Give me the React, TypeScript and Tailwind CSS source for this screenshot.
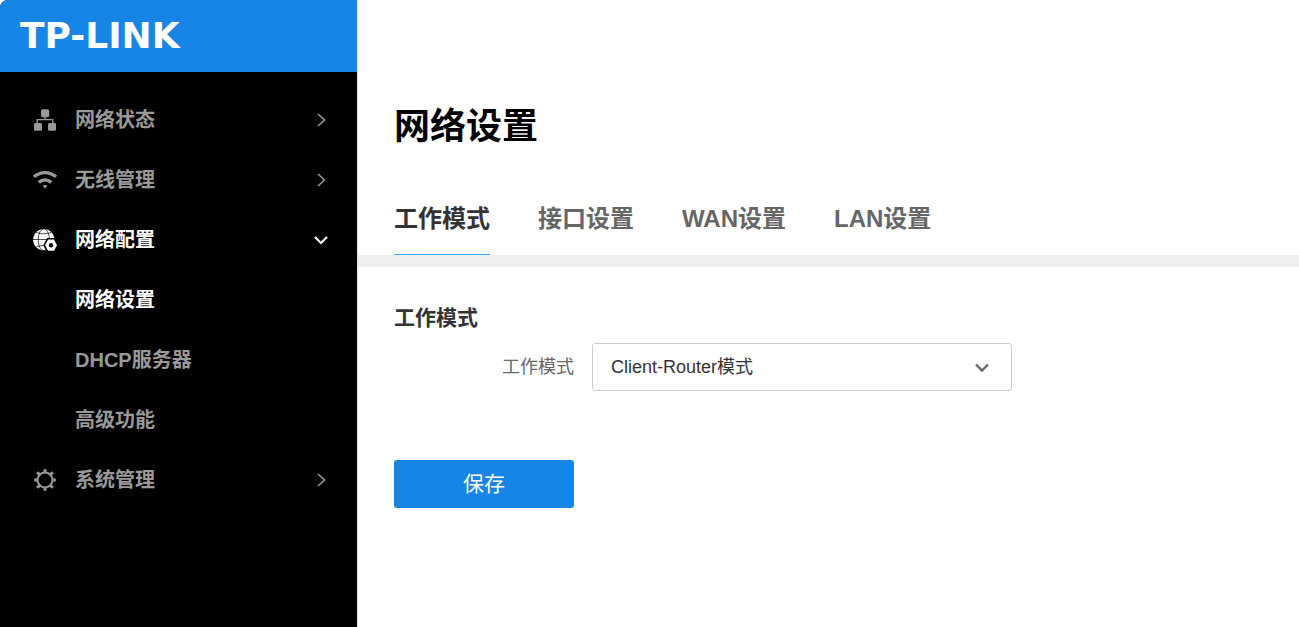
import { useState } from 'react'
import type { ReactNode } from 'react'

interface MenuItem {
  id: string
  label: string
  icon: ReactNode
  children?: string[]
}

function StatusIcon() {
  return (
    <svg viewBox="0 0 24 24" className="size-6" fill="currentColor" aria-hidden="true">
      <rect x="8" y="1.2" width="8.2" height="8" rx="1.8" />
      <rect x="1" y="15" width="8" height="7.8" rx="1.6" />
      <rect x="15" y="15" width="8" height="7.8" rx="1.6" />
      <path d="M12 9v3M4.2 16v-4.4h15.6V16" fill="none" stroke="currentColor" strokeWidth="1.3" />
    </svg>
  )
}

function WifiIcon() {
  return (
    <svg viewBox="0 0 24 24" className="size-6" fill="none" stroke="currentColor" aria-hidden="true">
      <path d="M1 8.8C7.5 3.2 16.5 3.2 23 8.8" strokeWidth="3.4" />
      <path d="M5.8 14.4c3.8-3.2 8.6-3.2 12.4 0" strokeWidth="3.4" />
      <path d="M9.6 17.6c1.5-.8 3.3-.8 4.8 0L12 20.8z" fill="currentColor" stroke="none" />
    </svg>
  )
}

function GlobeIcon() {
  return (
    <svg viewBox="0 0 24 24" className="size-6" aria-hidden="true">
      <circle cx="10.8" cy="11.7" r="10.7" fill="currentColor" />
      <g fill="none" stroke="#000" strokeWidth="0.7">
        <ellipse cx="10.8" cy="11.7" rx="5.6" ry="11" />
        <path d="M0 11.5h21.5M3 4.2c4.6 2.2 11 2.2 15.6 0M3 19.2c4.6-2.2 11-2.2 15.6 0" />
      </g>
      <path
        d="M14.6 10.8h6.8l3.5 6.4-3.5 6.4h-6.8l-3.5-6.4z"
        fill="currentColor"
        stroke="#000"
        strokeWidth="1.6"
      />
      <circle cx="18" cy="17.2" r="2.2" fill="#000" />
    </svg>
  )
}

function GearIcon() {
  return (
    <svg viewBox="0 0 24 24" className="size-6" fill="none" stroke="currentColor" aria-hidden="true">
      <circle cx="12" cy="12" r="7.5" strokeWidth="2" />
      <path
        d="M12 1.2v3.6M12 19.2v3.6M1.2 12h3.6M19.2 12h3.6M4.2 4.2l2.8 2.8M17 17l2.8 2.8M4.2 19.8L7 17M17 7l2.8-2.8"
        strokeWidth="3"
      />
    </svg>
  )
}

function Chevron({ open }: { open: boolean }) {
  return (
    <svg viewBox="0 0 24 24" className="size-6" fill="none" stroke="currentColor" aria-hidden="true">
      {open ? (
        <path d="M6 9l6 6 6-6" strokeWidth="2.2" />
      ) : (
        <path d="M9 6l6.5 6L9 18" strokeWidth="1.6" />
      )}
    </svg>
  )
}

const menu: MenuItem[] = [
  { id: 'status', label: '网络状态', icon: <StatusIcon /> },
  { id: 'wireless', label: '无线管理', icon: <WifiIcon /> },
  {
    id: 'network',
    label: '网络配置',
    icon: <GlobeIcon />,
    children: ['网络设置', 'DHCP服务器', '高级功能'],
  },
  { id: 'system', label: '系统管理', icon: <GearIcon /> },
]

const tabs = ['工作模式', '接口设置', 'WAN设置', 'LAN设置']

function Sidebar() {
  const [openId, setOpenId] = useState('network')
  const [page, setPage] = useState('网络设置')

  return (
    <aside className="w-[357px] shrink-0 overflow-hidden rounded-tl-lg bg-black">
      <div className="flex h-[72px] items-center bg-[#1785e6] pl-5">
        <span className="font-['DejaVu_Sans',sans-serif] text-4xl leading-none font-bold text-white">
          TP-LINK
        </span>
      </div>
      <nav className="pt-[18px] text-xl font-bold">
        {menu.map((item) => {
          const open = item.id === openId
          return (
            <div key={item.id}>
              <button
                type="button"
                aria-expanded={open}
                onClick={() => setOpenId(open ? '' : item.id)}
                className={`flex h-[60px] w-full items-center gap-[18px] pr-6 pl-[33px] ${
                  open ? 'text-white' : 'text-[#999]'
                }`}
              >
                {item.icon}
                <span className="flex-1 text-left">{item.label}</span>
                <Chevron open={open} />
              </button>
              {open &&
                item.children?.map((child) => (
                  <a
                    key={child}
                    href="#"
                    onClick={() => setPage(child)}
                    className={`flex h-[60px] items-center pl-[75px] ${
                      child === page ? 'text-white' : 'text-[#999]'
                    }`}
                  >
                    {child}
                  </a>
                ))}
            </div>
          )
        })}
      </nav>
    </aside>
  )
}

export default function App() {
  const [tab, setTab] = useState('工作模式')
  const [mode, setMode] = useState('client-router')

  return (
    <div
      lang="zh-CN"
      className="flex min-h-screen bg-white font-['Liberation_Sans','Noto_Sans_CJK_SC',sans-serif] text-[#333]"
    >
      <Sidebar />
      <main className="min-w-0 flex-1 border-l border-[#e5e5e5]">
        <h1 className="px-9 pt-[102px] text-4xl leading-[50px] font-bold text-black">网络设置</h1>
        <div role="tablist" className="mt-8 flex gap-12 border-b-12 border-[#efefef] px-9">
          {tabs.map((name) => (
            <button
              key={name}
              type="button"
              role="tab"
              aria-selected={name === tab}
              onClick={() => setTab(name)}
              className={`h-[71px] border-b text-2xl font-bold ${
                name === tab ? 'border-[#36a9f5] text-[#333]' : 'border-transparent text-[#666]'
              }`}
            >
              {name}
            </button>
          ))}
        </div>

        <form className="px-9 pt-9" onSubmit={(e) => e.preventDefault()}>
          <h2 className="text-[21px] leading-[30px] font-bold">工作模式</h2>
          <div className="mt-[10px] flex items-center gap-[18px]">
            <label htmlFor="mode" className="w-[180px] text-right text-lg text-[#666]">
              工作模式
            </label>
            <div className="relative w-[420px]">
              <select
                id="mode"
                value={mode}
                onChange={(e) => setMode(e.target.value)}
                className="h-12 w-full appearance-none rounded-[3px] border border-[#ccc] bg-white px-[18px] text-lg"
              >
                <option value="client-router">Client-Router模式</option>
                <option value="ap">AP模式</option>
              </select>
              <svg
                viewBox="0 0 24 24"
                className="pointer-events-none absolute top-3 right-[18px] size-6"
                fill="none"
                stroke="#666"
                strokeWidth="2.4"
                aria-hidden="true"
              >
                <path d="M6 9.5l6 6 6-6" />
              </svg>
            </div>
          </div>
          <button
            type="submit"
            className="mt-[69px] h-12 w-[180px] rounded-[3px] bg-[#1785e6] text-[21px] text-white"
          >
            保存
          </button>
        </form>
      </main>
    </div>
  )
}
